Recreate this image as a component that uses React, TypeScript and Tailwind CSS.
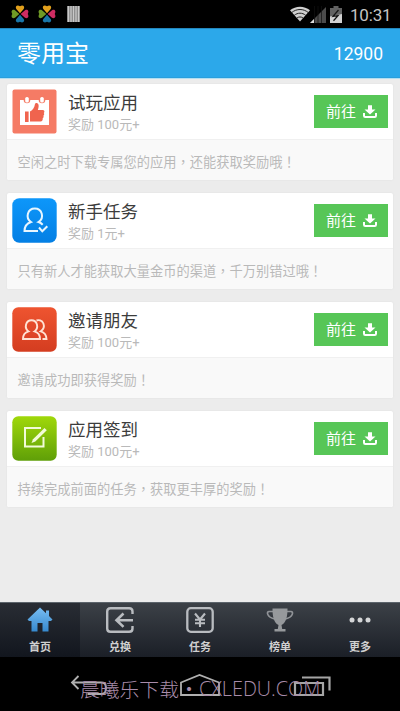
import type { ReactNode } from "react";

type Task = {
  title: string;
  reward: string;
  desc: string;
  icon: ReactNode;
};

const CJK = "font-['Roboto','Noto_Sans_CJK_SC',sans-serif]";

function Clover() {
  return (
    <svg width="20" height="20" viewBox="0 0 20 20">
      <path d="M10 9.3 6.3 5C4.8 2.7 7 .4 10 2.3 13 .4 15.2 2.7 13.7 5Z" fill="#e2a01c" />
      <path d="M10.7 10 15 6.3c2.3-1.5 4.6.7 2.7 3.7 1.9 3-.4 5.2-2.7 3.7Z" fill="#cf2c62" />
      <path d="M10 10.7 6.3 15c-1.5 2.3.7 4.6 3.7 2.7 3 1.9 5.2-.4 3.7-2.7Z" fill="#1976a8" />
      <path d="M9.3 10 5 6.3C2.7 4.8.4 7 2.3 10 .4 13 2.7 15.2 5 13.7Z" fill="#6f9a25" />
    </svg>
  );
}

function StatusBar() {
  return (
    <div className="flex h-7 items-center justify-between bg-black pl-[10px] pr-[8px]">
      <div className="flex items-center">
        <Clover />
        <div className="ml-[7px] flex">
          <Clover />
        </div>
        <svg className="ml-[10px]" width="13" height="16" viewBox="0 0 13 16">
          <path d="M0 0h13v16H0z" fill="#858585" />
          <path d="M1.5 0v16M4 0v16M6.5 0v16M9 0v16M11.5 0v16" stroke="#c9c9c9" strokeWidth="1.3" />
        </svg>
      </div>
      <div className="flex items-center">
        <svg width="20" height="16" viewBox="0 0 20 16">
          <path d="M10 15.5 0 4.3C5.7-.6 14.3-.6 20 4.3Z" fill="#d0d0d0" />
          <path d="M1.8 6.5c4.7-4 11.7-4 16.4 0M4.3 9.3c3.3-2.8 8.1-2.8 11.4 0M7 12c1.8-1.4 4.2-1.4 6 0" fill="none" stroke="#222" strokeWidth="1" />
        </svg>
        <svg width="16" height="17" viewBox="0 0 16 17">
          <path d="M0 17 16 1v16Z" fill="#4c4c4c" />
          <path d="M0 17l4-4v4Z" fill="#ddd" />
          <path d="M4.5 0v17M8 0v17M11.5 0v17" stroke="#111" strokeWidth=".7" />
        </svg>
        <svg className="ml-[4px]" width="12" height="17" viewBox="0 0 12 17">
          <path d="M3.5 0h5v2H12v15H0V2h3.5Z" fill="#626262" />
          <path d="M0 10.5 12 8v9H0Z" fill="#d2d2d2" />
          <path d="M8.5 4 3 10.3l5-.6-4.5 5" fill="none" stroke="#161616" strokeWidth="1.3" />
        </svg>
        <span className="ml-[8px] w-[42px] whitespace-nowrap pt-[2px] font-['Roboto',sans-serif] text-[17px] leading-7 tracking-[-0.2px] text-[#c4c4c4]">
          10:31
        </span>
      </div>
    </div>
  );
}

function CalendarIcon() {
  return (
    <svg width="45" height="45" viewBox="0 0 45 45">
      <rect x=".5" y=".5" width="44" height="44" rx="2" fill="#f57b65" />
      <path d="M8 11h29v25H8z" fill="#fff" />
      <circle cx="15" cy="11" r="3.3" fill="#f57b65" />
      <circle cx="30" cy="11" r="3.3" fill="#f57b65" />
      <rect x="13.2" y="8" width="3.6" height="5.5" rx="1.6" fill="#fff" />
      <rect x="28.2" y="8" width="3.6" height="5.5" rx="1.6" fill="#fff" />
      <path d="M13 22.5h3.6V33H13zM18 22.5c3-1.3 4.4-4 5-7.5.4-1.5 3-1.2 3.5.8.4 1.6-.1 3.5-.7 5.2H31c1.8.2 1.7 2.2.8 3 .7 1 .5 2-.4 2.7.5 1 .1 2-.7 2.5.3 1.900-.5 3.300-2.200 3.300H18Z" fill="#f0644e" />
    </svg>
  );
}

function UserCheckIcon() {
  return (
    <svg width="45" height="45" viewBox="0 0 45 45">
      <defs>
        <linearGradient id="blue" x1="0" y1="0" x2="0" y2="1">
          <stop stopColor="#0d97fa" />
          <stop offset="1" stopColor="#047fe4" />
        </linearGradient>
      </defs>
      <rect x=".3" y=".3" width="44.4" height="44.4" rx="7" fill="url(#blue)" />
      <g fill="none" stroke="#e8f6ff" strokeWidth="2">
        <path d="M26 33H12.500c0-5 2.200-7.500 6.500-9-6-4-3.500-13.500 3.800-13.500s10 9.500 3.700 13.500c1.800.5 3 1.400 4.200 2.700" />
        <path d="m27 29.500 3.300 3.800 5-5" />
      </g>
    </svg>
  );
}

function FriendsIcon() {
  return (
    <svg width="45" height="45" viewBox="0 0 45 45">
      <defs>
        <linearGradient id="red" x1="0" y1="0" x2="0" y2="1">
          <stop stopColor="#ee5430" />
          <stop offset="1" stopColor="#d43d20" />
        </linearGradient>
      </defs>
      <rect x=".3" y=".3" width="44.4" height="44.4" rx="6" fill="url(#red)" />
      <g fill="none" stroke="#ffe3d4" strokeWidth="1.9">
        <path d="M11 32c0-4.300 1.800-6.600 5.500-7.600-4.700-3.500-2.800-11.200 3-11.200s7.700 7.700 3 11.200c3.700 1 5.500 3.300 5.500 7.600Z" />
        <path d="M24.500 13.500c2-.8 5.500-.3 6.900 3 1.100 3 0 6-2.600 7.800 3.700 1 5.500 3.300 5.700 7.700h-4" />
      </g>
    </svg>
  );
}

function EditIcon() {
  return (
    <svg width="45" height="45" viewBox="0 0 45 45">
      <defs>
        <linearGradient id="green" x1="0" y1="0" x2="0" y2="1">
          <stop stopColor="#a0d80a" />
          <stop offset="1" stopColor="#5f9f08" />
        </linearGradient>
      </defs>
      <rect x=".3" y=".3" width="44.4" height="44.4" rx="6" fill="url(#green)" />
      <path d="M29 12H13v18.500h18.500V21" fill="none" stroke="#f2fbd8" strokeWidth="2" />
      <path d="m19.500 27 1.500-3.800L32.500 12l2.300 2.300L23.300 25.500Z" fill="#f2fbd8" />
    </svg>
  );
}

const TASKS: Task[] = [
  { title: "试玩应用", reward: "奖励 100元+", desc: "空闲之时下载专属您的应用，还能获取奖励哦！", icon: <CalendarIcon /> },
  { title: "新手任务", reward: "奖励 1元+", desc: "只有新人才能获取大量金币的渠道，千万别错过哦！", icon: <UserCheckIcon /> },
  { title: "邀请朋友", reward: "奖励 100元+", desc: "邀请成功即获得奖励！", icon: <FriendsIcon /> },
  { title: "应用签到", reward: "奖励 100元+", desc: "持续完成前面的任务，获取更丰厚的奖励！", icon: <EditIcon /> },
];

// Punctuation sits in the middle of its cell, which only the TC face does.
function Description({ text }: { text: string }) {
  return text.split(/([，！])/).map((part, i) =>
    i % 2 ? (
      <span key={i} lang="zh-TW" className="font-['Noto_Sans_CJK_TC',sans-serif]">
        {part}
      </span>
    ) : (
      part
    ),
  );
}

function TaskCard({ task }: { task: Task }) {
  return (
    <div className="h-24 rounded-[2px] bg-white shadow-[0_0_2px_#dcdcdc]">
      <div className="flex h-[55px] pl-[5px] pr-[5px]">
        <div className="mt-[5px] shrink-0">{task.icon}</div>
        <div className="ml-[11px] flex-1">
          <h2 className="mt-[7px] text-[17.5px] leading-6 text-[#3c3c3c]">{task.title}</h2>
          <p className="text-[13px] leading-[19px] text-[#b9b9b9]">{task.reward}</p>
        </div>
        <button className="mt-[11px] flex h-[33px] w-[74px] items-center bg-[#57c657] pl-3 text-[15px] text-white">
          <span className="pt-[2px]">前往</span>
          <svg className="ml-[7px]" width="14" height="14" viewBox="0 0 14 14">
            <path d="M5 .3h4v4.200h3.500L7 9.500 1.500 4.500H5Z" fill="#fff" />
            <path d="M1 8v2.700q0 1.300 1.300 1.300h9.400q1.300 0 1.300-1.300V8" fill="none" stroke="#fff" strokeWidth="2" />
          </svg>
        </button>
      </div>
      <div className="h-[41px] rounded-b-[2px] border-t border-[#f0f0f0] bg-[#f9f9f9] pl-[10.5px] text-[13.25px] leading-[43px] whitespace-nowrap text-[#b9b9b9]">
        <Description text={task.desc} />
      </div>
    </div>
  );
}

const TABS: { label: string; icon: ReactNode }[] = [
  {
    label: "首页",
    icon: (
      <svg width="26" height="26" viewBox="0 0 26 26">
        <defs>
          <linearGradient id="home" x1="0" y1="0" x2="0" y2="1">
            <stop stopColor="#78bdf2" />
            <stop offset="1" stopColor="#3689ce" />
          </linearGradient>
        </defs>
        <path d="M13 .5 .5 12.500 2 14h2.500v10.500h6V16h5v8.500h6V14H24l1.500-1.500-3.500-3.400V3.500h-3v2.700Z" fill="url(#home)" />
      </svg>
    ),
  },
  {
    label: "兑换",
    icon: (
      <svg width="28" height="26" viewBox="0 0 28 26" fill="none" stroke="#b9bcc0" strokeWidth="2.4">
        <path d="M26.500 7V4.500q0-3.300-3.300-3.300H4.500q-3.300 0-3.300 3.300v17q0 3.300 3.300 3.300h18.700q3.300 0 3.300-3.300V19" />
        <path d="M27 13.200H11M17.500 6.500 10.500 13.200l7 6.700" strokeWidth="2.6" />
      </svg>
    ),
  },
  {
    label: "任务",
    icon: (
      <svg width="28" height="26" viewBox="0 0 28 26" fill="none" stroke="#b9bcc0" strokeWidth="2.3">
        <rect x="1.3" y="1.2" width="25.4" height="23.6" rx="3.5" />
        <path d="m9 6.500 5 6 5-6M14 12v8M9 12.800h10M9 16.300h10" strokeWidth="2.1" />
      </svg>
    ),
  },
  {
    label: "榜单",
    icon: (
      <svg width="28" height="26" viewBox="0 0 28 26">
        <path d="M7 4.500H3C.3 4.500.7 10 8.500 12M21 4.500h4c2.700 0 2.300 5.500-5.500 7.500" fill="none" stroke="#909397" strokeWidth="1.7" />
        <path d="M6.500 1.500h15c0 8-1.200 14-6 16.500l.7 4h3.300V24.500h-11V22h3.300l.7-4c-4.800-2.500-6-8.500-6-16.500Z" fill="#96999c" />
      </svg>
    ),
  },
  {
    label: "更多",
    icon: (
      <svg width="24" height="26" viewBox="0 0 24 26" fill="#d4d5d7">
        <circle cx="4" cy="13" r="2.5" />
        <circle cx="12" cy="13" r="2.5" />
        <circle cx="20" cy="13" r="2.5" />
      </svg>
    ),
  },
];

function TabBar() {
  return (
    <nav className="grid h-[55px] grid-cols-5 border-t border-[#5c646b] bg-linear-to-b from-[#3c4147] to-[#1b1f27]">
      {TABS.map((tab, i) => (
        <div
          key={tab.label}
          className={`flex flex-col items-center pt-1 ${i === 0 ? "bg-linear-to-b from-[#292d34] to-[#12161e]" : ""}`}
        >
          {tab.icon}
          <span className="mt-[7px] text-[11px] leading-4 font-bold text-[#d0d0d0]">{tab.label}</span>
        </div>
      ))}
    </nav>
  );
}

function SystemNav() {
  return (
    <div className="relative flex h-[54px] items-start bg-black">
      <svg className="mt-[18px] ml-[70px]" width="38" height="24" viewBox="0 0 38 24" fill="none" stroke="#b0b0b0" strokeWidth="1.8">
        <path d="M8.500 1 2 7.500 8.500 14M2 7.500h29q5 0 5 5v1q0 5.500-5 5.500H17.500" />
      </svg>
      <svg className="mt-[16px] ml-[71px]" width="42" height="26" viewBox="0 0 42 26" fill="none" stroke="#b0b0b0" strokeWidth="1.8">
        <path d="M2 22V9.500L20.500 2 40 9.500V22Z" />
      </svg>
      <svg className="mt-[17px] ml-[71px]" width="40" height="26" viewBox="0 0 40 26" fill="none" stroke="#a5a5a5" strokeWidth="2.2">
        <path d="M3 9h28v12H3ZM10 3.500h27.500v13" />
      </svg>
      <div className="absolute top-[18px] left-20 flex items-center leading-7 whitespace-nowrap text-[#a98caa]">
        <span className="font-['Noto_Sans_CJK_SC',sans-serif] text-[19.8px] font-light">晨曦乐下载</span>
        <span className="w-[20px] text-center font-['Noto_Sans_CJK_SC',sans-serif] text-[19px]">·</span>
        <span className="font-['Open_Sans',sans-serif] text-[19.8px] font-light">CXLEDU.COM</span>
      </div>
    </div>
  );
}

export default function App() {
  return (
    <div className={`flex h-[711px] w-[400px] flex-col overflow-hidden bg-[#ececec] ${CJK}`}>
      <StatusBar />
      <header className="flex h-[50px] items-center justify-between border-t border-b border-t-[#2487bd] border-b-[#2a9fdd] bg-[#2ca8ea] pr-[17px] pl-[17px] text-white">
        <h1 className="pt-[2px] text-[24px] leading-8 font-normal">零用宝</h1>
        <span className="pt-[2px] text-[17.5px]">12900</span>
      </header>
      <main className="flex flex-1 flex-col gap-[13px] border-t border-[#b4dff2] px-[7px] pt-[5px]">
        {TASKS.map((task) => (
          <TaskCard key={task.title} task={task} />
        ))}
      </main>
      <TabBar />
      <SystemNav />
    </div>
  );
}
